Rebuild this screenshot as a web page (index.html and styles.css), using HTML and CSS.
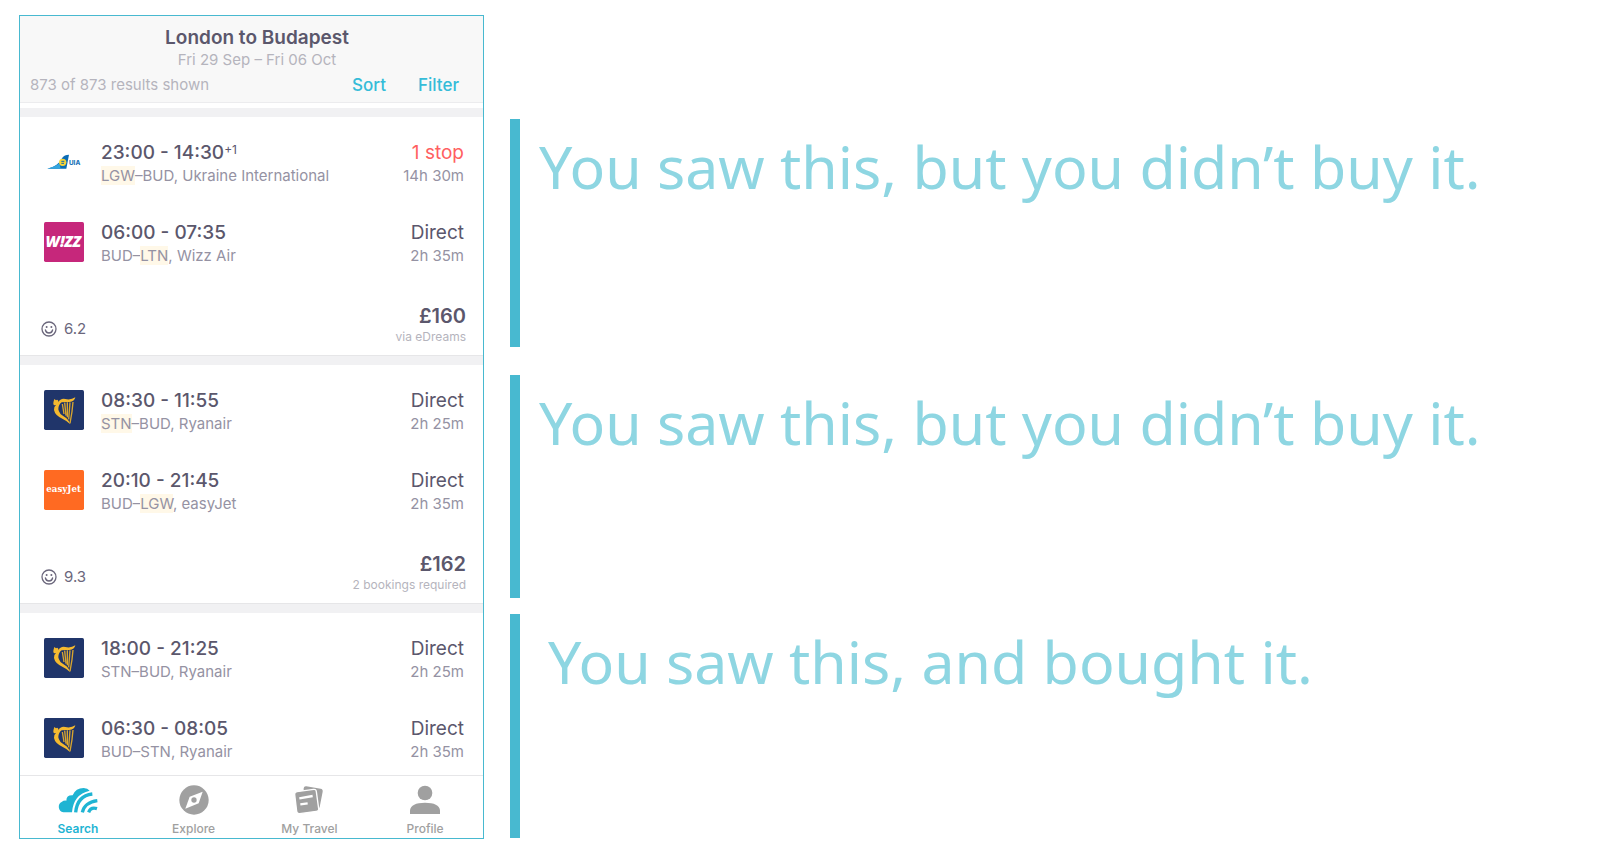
FILE: index.html
```html
<!DOCTYPE html>
<html lang="en">
<head>
<meta charset="utf-8">
<title>London to Budapest</title>
<link rel="stylesheet" href="styles.css">
</head>
<body>
<svg class="defs" aria-hidden="true">
  <symbol id="harp" viewBox="0 0 120 120">
    <rect width="120" height="120" rx="5" fill="#20356a"/>
    <path fill="#f4b92f" d="M28 42Q28 35 31 27L36 31Q40 27 43 33L42 37Q50 24 64 27Q80 31 94 22Q92 34 76 36Q60 35 53 37Q43 44 43 58Q45 72 62 81Q74 88 78 102Q70 93 55 86Q33 76 30 60Q29 50 36 45L30 46Z"/>
    <path fill="none" stroke="#d9a62f" stroke-width="4" d="M55 42L60 72M62 38L66 77M70 37L70 82M78 37L74 88M87 36Q85 66 78 100"/>
  </symbol>
  <symbol id="smile" viewBox="0 0 16 16">
    <circle cx="8" cy="8" r="7" fill="none" stroke="#6b677c" stroke-width="1.3"/>
    <circle cx="5.6" cy="6" r="1" fill="#6b677c"/><circle cx="10.4" cy="6" r="1" fill="#6b677c"/>
    <path d="M4.4 9Q5 12 8 12T11.600 9" fill="none" stroke="#6b677c" stroke-width="1.3" stroke-linecap="round"/>
  </symbol>
</svg>
<div class="page">
  <main class="phone">
    <header class="top">
      <h1 class="title">London to Budapest</h1>
      <p class="dates">Fri 29 Sep – Fri 06 Oct</p>
      <div class="tools">
        <span class="count">873 of 873 results shown</span>
        <button class="tool">Sort</button>
        <button class="tool">Filter</button>
      </div>
    </header>
    <section class="card">
      <div class="leg">
        <svg class="logo" viewBox="0 0 120 120" role="img" aria-label="UIA">
          <path fill="#0b6cb5" d="M10 80Q42 73 55 47Q61 38 75 38L67 80Z"/>
          <path fill="#35a6de" d="M10 80Q34 74 46 64L50 80Z"/>
          <circle cx="56" cy="61" r="11" fill="#f7d336"/><path d="M52 58H61M52 64H60" stroke="#0b6cb5" stroke-width="3"/>
          <text class="uia" x="75" y="69">UIA</text>
        </svg>
        <div class="route"><p class="time">23:00 - 14:30<sup>+1</sup></p><p class="sub"><mark>LGW</mark>–BUD, Ukraine International</p></div>
        <div class="length"><p class="stops late">1 stop</p><p class="sub">14h 30m</p></div>
      </div>
      <div class="leg">
        <svg class="logo" viewBox="0 0 120 120" role="img" aria-label="Wizz">
          <rect width="120" height="120" rx="5" fill="#c6277b"/><text class="wizz" x="58" y="76">W!ZZ</text>
        </svg>
        <div class="route"><p class="time">06:00 - 07:35</p><p class="sub">BUD–<mark>LTN</mark>, Wizz Air</p></div>
        <div class="length"><p class="stops">Direct</p><p class="sub">2h 35m</p></div>
      </div>
      <footer class="deal">
        <span class="score"><svg class="smile" aria-hidden="true"><use href="#smile"/></svg>6.2</span>
        <div class="offer"><p class="price">£160</p><p class="via">via eDreams</p></div>
      </footer>
    </section>
    <section class="card">
      <div class="leg">
        <svg class="logo" role="img" aria-label="Ryanair"><use href="#harp"/></svg>
        <div class="route"><p class="time">08:30 - 11:55</p><p class="sub"><mark>STN</mark>–BUD, Ryanair</p></div>
        <div class="length"><p class="stops">Direct</p><p class="sub">2h 25m</p></div>
      </div>
      <div class="leg">
        <svg class="logo" viewBox="0 0 120 120" role="img" aria-label="easyJet">
          <rect width="120" height="120" rx="5" fill="#ff6a22"/><text class="easyjet" x="59" y="67">easyJet</text>
        </svg>
        <div class="route"><p class="time">20:10 - 21:45</p><p class="sub">BUD–<mark>LGW</mark>, easyJet</p></div>
        <div class="length"><p class="stops">Direct</p><p class="sub">2h 35m</p></div>
      </div>
      <footer class="deal">
        <span class="score"><svg class="smile" aria-hidden="true"><use href="#smile"/></svg>9.3</span>
        <div class="offer"><p class="price">£162</p><p class="via">2 bookings required</p></div>
      </footer>
    </section>
    <section class="card">
      <div class="leg">
        <svg class="logo" role="img" aria-label="Ryanair"><use href="#harp"/></svg>
        <div class="route"><p class="time">18:00 - 21:25</p><p class="sub">STN–BUD, Ryanair</p></div>
        <div class="length"><p class="stops">Direct</p><p class="sub">2h 25m</p></div>
      </div>
      <div class="leg last">
        <svg class="logo" role="img" aria-label="Ryanair"><use href="#harp"/></svg>
        <div class="route"><p class="time">06:30 - 08:05</p><p class="sub">BUD–STN, Ryanair</p></div>
        <div class="length"><p class="stops">Direct</p><p class="sub">2h 35m</p></div>
      </div>
    </section>
    <nav class="tabs">
      <a class="tab active" href="#search">
        <svg class="tab-icon" viewBox="0 0 120 90" aria-hidden="true">
          <path fill="currentColor" d="M16 82A17 17 0 0 1 12 50Q17 46 25 47Q25 30 44 31Q53 9 77 9Q89 10 95 17Q46 28 42 82Z"/>
          <path fill="none" stroke="currentColor" stroke-width="10" d="M53 82Q58 32 103 27M73 82Q80 52 118 47M92 82Q98 65 117 71"/>
        </svg>Search</a>
      <a class="tab" href="#explore">
        <svg class="tab-icon" viewBox="0 0 120 90" aria-hidden="true">
          <circle cx="60" cy="45" r="44" fill="currentColor"/>
          <path fill="#fff" d="M86 20L74 55L34 71L47 35Z"/><circle cx="60" cy="45" r="8" fill="currentColor"/>
        </svg>Explore</a>
      <a class="tab" href="#travel">
        <svg class="tab-icon" viewBox="0 0 120 90" aria-hidden="true">
          <path fill="currentColor" d="M44 10Q45 3 52 4L95 11Q102 12 101 20L92 66Q90 72 84 70L44 60Z"/>
          <path fill="currentColor" stroke="#fff" stroke-width="4" d="M17 29Q16 21 24 20L74 13Q81 12 82 20L89 71Q90 78 82 79L32 86Q24 87 23 79Z"/>
          <path stroke="#fff" stroke-width="7" d="M31 40L71 33M34 58L56 55"/>
        </svg>My Travel</a>
      <a class="tab" href="#profile">
        <svg class="tab-icon" viewBox="0 0 120 90" aria-hidden="true">
          <circle cx="60" cy="24" r="22" fill="currentColor"/>
          <path fill="currentColor" d="M15 87V76Q18 53 60 53T105 76V87Z"/>
        </svg>Profile</a>
    </nav>
  </main>
  <aside class="notes">
    <p class="note first">You saw this, but you didn’t buy it.</p>
    <p class="note second">You saw this, but you didn’t buy it.</p>
    <p class="note third">You saw this, and bought it.</p>
  </aside>
</div>
</body>
</html>
```

FILE: styles.css
```css
* { box-sizing: border-box; margin: 0; padding: 0; }
body { background: #fff; color: #5b576c; font-family: Inter, "Liberation Sans", sans-serif; }
.defs { display: none; }
.page { display: flex; gap: 26px; padding: 15px 19px; align-items: flex-start; }

.phone { flex: 0 0 465px; border: 1px solid #48b9d0; background: #fff; }
.top { background: #f8f8f8; border-bottom: 1px solid #ececee; padding: 10px 10px 6px; margin-bottom: 5px; text-align: center; }
.title { font-size: 19px; line-height: 24px; font-weight: 600; padding-left: 11px; }
.dates { font-size: 15px; line-height: 20px; color: #b5b4bd; padding-left: 11px; }
.tools { display: flex; gap: 32px; align-items: center; padding-right: 14px; margin-top: 4px; }
.count { flex: 1; text-align: left; font-size: 15px; line-height: 22px; color: #b5b4bd; }
.tool { border: 0; background: none; font: 500 17px/22px Inter, sans-serif; color: #35bcd8; }

.card { border-top: 9px solid #f1f1f3; border-bottom: 1px solid #e6e6e8; padding: 25px 19px 0 24px; }
.leg { display: flex; gap: 17px; height: 80px; }
.leg.last { height: 57px; }
.logo { width: 40px; height: 40px; flex: none; }
.route, .length { padding-top: 1px; }
.route { flex: 1; }
.time { font-size: 19px; line-height: 20px; font-weight: 500; }
.time sup { font-size: 12px; line-height: 12px; font-weight: 400; vertical-align: 5px; }
.sub { font-size: 15px; line-height: 20px; margin-top: 3px; color: #9592a3; }
.sub mark { background: #fff8e8; color: inherit; }
.length { text-align: right; }
.stops { font-size: 19px; line-height: 20px; }
.stops.late { color: #ff5f61; }
.deal { display: flex; justify-content: space-between; align-items: center; height: 53px; margin: 0 -2px 0 -3px; }
.score { display: flex; gap: 7px; align-items: center; font-size: 15px; line-height: 20px; color: #6b677c; }
.smile { width: 16px; height: 16px; }
.offer { text-align: right; padding-bottom: 7px; }
.price { font-size: 20px; line-height: 24px; font-weight: 600; }
.via { font-size: 12px; line-height: 18px; color: #b5b4bd; }

.tabs { display: flex; }
.tab { flex: 1; display: flex; flex-direction: column; gap: 4px; align-items: center; padding-top: 9px; font-size: 12px; line-height: 19px; font-weight: 500; color: #a0a0a0; text-decoration: none; }
.tab.active { color: #1fb4d3; font-weight: 600; }
.tab-icon { width: 40px; height: 30px; }

.notes { flex: 1; padding-top: 104px; }
.note { border-left: 10px solid #48b9d0; padding: 3px 0 0 19px; font-family: "Noto Sans", sans-serif; font-size: 59px; line-height: 88px; color: #8ed6e2; }
.first { min-height: 228px; margin-bottom: 28px; }
.second { min-height: 223px; margin-bottom: 16px; }
.third { min-height: 224px; padding-left: 28px; }

.uia { font: 800 19px Inter, sans-serif; fill: #1c74b8; }
.wizz { font: italic 800 46px "Open Sans", sans-serif; fill: #fff; text-anchor: middle; }
.easyjet { font: bold 26px "DejaVu Serif", serif; fill: #fff; text-anchor: middle; }
```
